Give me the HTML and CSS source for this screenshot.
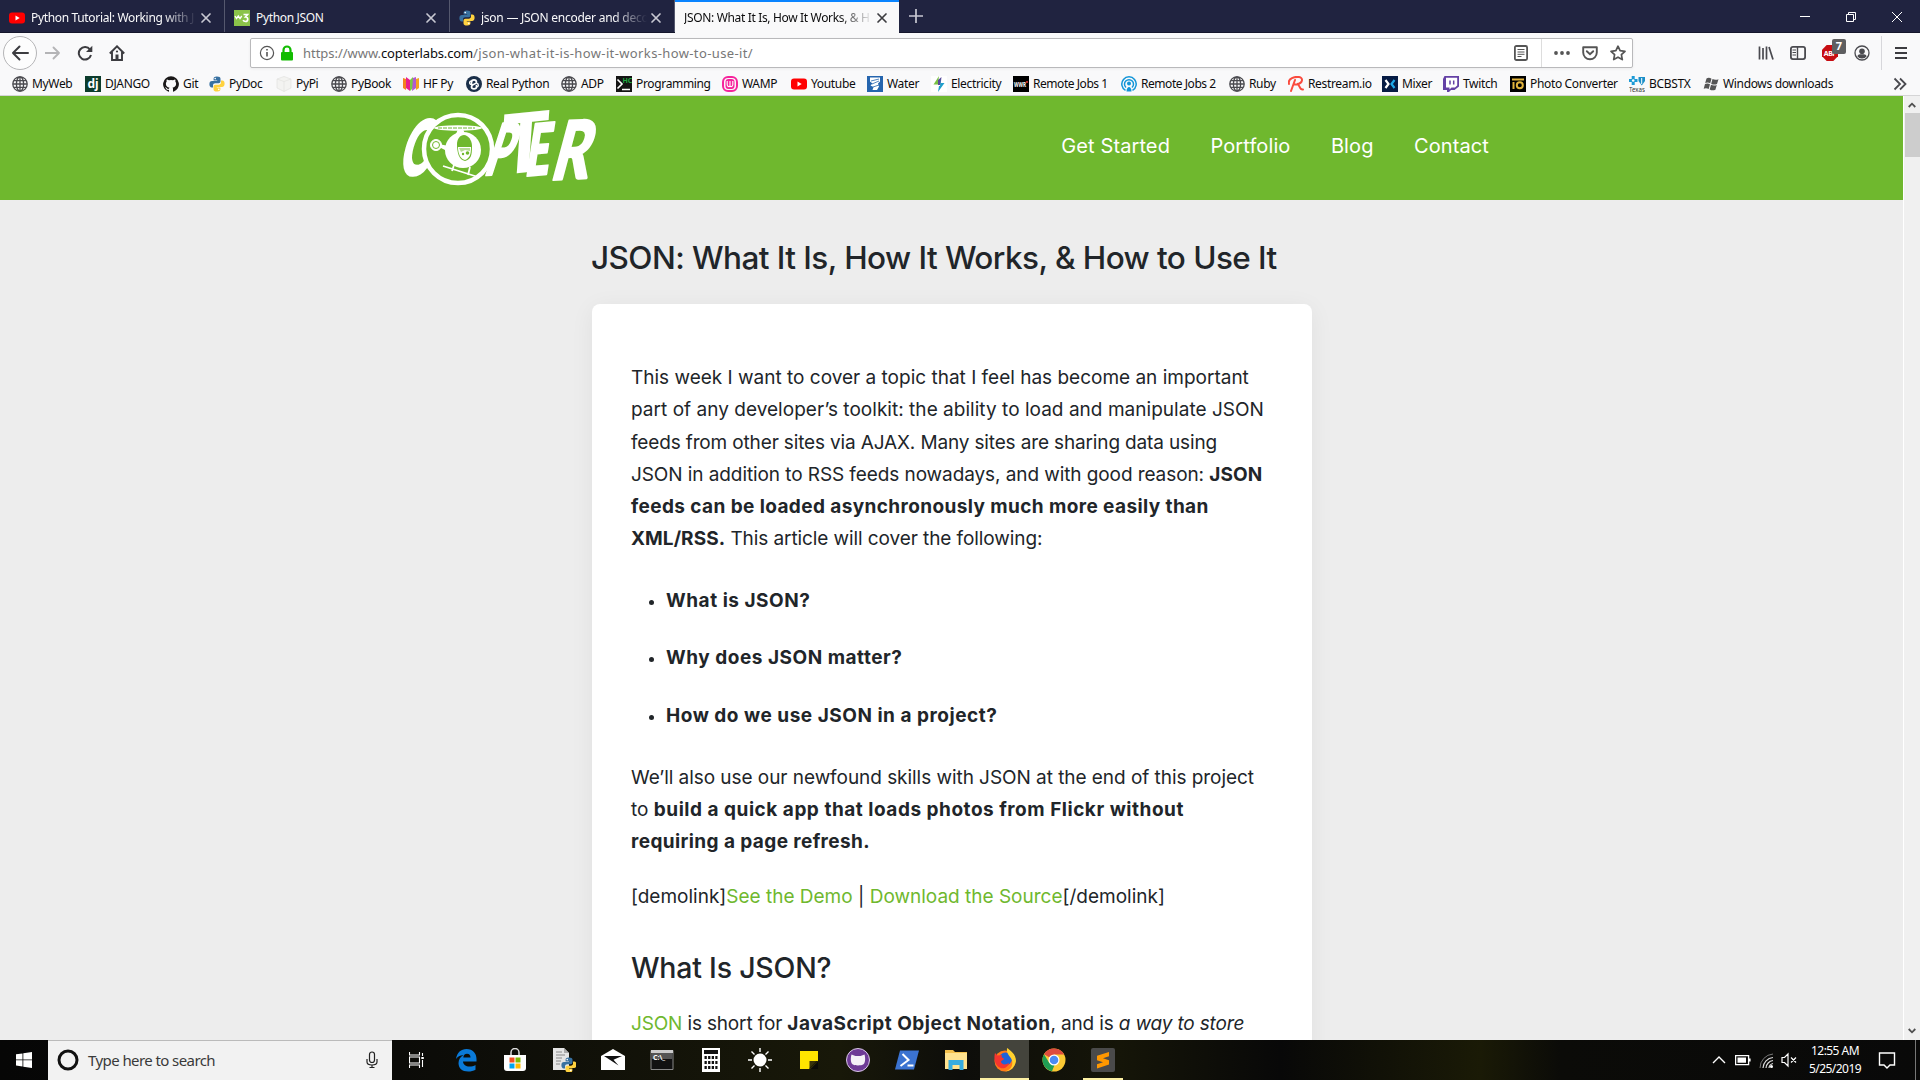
FILE: index.html
```html
<!DOCTYPE html>
<html lang="en">
<head>
<meta charset="utf-8">
<title>JSON: What It Is, How It Works, &amp; How to Use It</title>
<link rel="stylesheet" href="styles.css">
</head>
<body>
<svg class="defs" width="0" height="0">
  <symbol id="close" viewBox="0 0 12 12"><path d="M2 2l8 8M10 2l-8 8" fill="none" stroke="currentColor" stroke-width="1.7" stroke-linecap="round"/></symbol>
  <symbol id="globe" viewBox="0 0 16 16"><g fill="none" stroke="#4a4a4f" stroke-width="1.3"><circle cx="8" cy="8" r="7.2"/><ellipse cx="8" cy="8" rx="3.6" ry="7.2"/><path d="M8 1v14M1 8h14M2 4.7h12M2 11.3h12"/></g></symbol>
  <symbol id="python" viewBox="0 0 16 16"><path fill="#3871a1" d="M7.9.5C5 .5 4.6 1.6 4.6 2.8v1.6h3.6V5H3C1.300 5 .4 6.200.4 8.200c0 2 .9 3.200 2.300 3.200h1.300V9.500c0-1.300 1-2.200 2.200-2.200h3.400c1.100 0 1.900-.9 1.900-2V2.800C11.500 1.400 10.300.5 7.900.5z"/><path fill="#ffd23f" d="M8.100 15.500c2.900 0 3.300-1.100 3.300-2.300v-1.600H7.800V11H13c1.700 0 2.600-1.200 2.600-3.200 0-2-.9-3.200-2.300-3.200H12v1.900c0 1.300-1 2.200-2.200 2.200H6.400c-1.100 0-1.900.9-1.900 2v2.500c0 1.400 1.200 2.300 3.600 2.300z"/><circle cx="6.200" cy="2.600" r=".8" fill="#fff"/><circle cx="9.800" cy="13.400" r=".8" fill="#fff"/></symbol>
  <symbol id="youtube" viewBox="0 0 16 16"><rect x="0" y="2.500" width="16" height="11" rx="3" fill="#f00"/><path d="M6.500 5.600v4.800L10.700 8z" fill="#fff"/></symbol>
</svg>

<header class="tabs">
  <div class="tab">
    <svg class="ic"><use href="#youtube"/></svg><span class="tab-title fade">Python Tutorial: Working with J</span><svg class="x"><use href="#close"/></svg>
  </div>
  <div class="tab">
    <svg class="ic" viewBox="0 0 16 16"><path fill="#8bc34a" d="M0 0h16v16H0z"/><path d="M1 6l1.500 2.500L4.300 6 6 8.500 7.800 6" fill="none" stroke="#fff" stroke-width="1.300"/><path d="M9.500 4.500h4l-2 2.500c3 0 3 4.500 0 4.500-1.200 0-2-.5-2.300-1.500" fill="none" stroke="#fff" stroke-width="1.700"/></svg><span class="tab-title">Python JSON</span><svg class="x"><use href="#close"/></svg>
  </div>
  <div class="tab">
    <svg class="ic"><use href="#python"/></svg><span class="tab-title fade tab-enc">json — JSON encoder and deco</span><svg class="x"><use href="#close"/></svg>
  </div>
  <div class="tab active">
    <span class="tab-title fade">JSON: What It Is, How It Works, &amp; H</span><svg class="x"><use href="#close"/></svg>
  </div>
  <svg class="plus" viewBox="0 0 14 14"><path d="M7 0v14M0 7h14" stroke="#c8c8d2" stroke-width="1.700"/></svg>
  <div class="winctl">
    <svg viewBox="0 0 12 12"><path d="M1 5.500h10" stroke="#fff"/></svg>
    <svg viewBox="0 0 12 12"><path d="M1.500 3.500h7v7h-7zM3.500 3V1.500h7v7H9" fill="none" stroke="#fff"/></svg>
    <svg viewBox="0 0 12 12"><path d="M1 1l10 10M11 1L1 11" stroke="#fff"/></svg>
  </div>
</header>

<nav class="toolbar">
  <div class="navbtns">
    <span class="back"><svg viewBox="0 0 18 16"><path d="M17 8H2M8.500 1.500L2 8l6.500 6.500" fill="none" stroke="#3c3c40" stroke-width="2" stroke-linecap="round" stroke-linejoin="round"/></svg></span>
    <svg viewBox="0 0 16 16"><path d="M0 8h14M8.500 2.500L14 8l-5.500 5.500" fill="none" stroke="#b4b4b6" stroke-width="1.800" stroke-linecap="round" stroke-linejoin="round"/></svg>
    <svg viewBox="0 0 16 16"><path d="M13 4.600A6.200 6.200 0 1 0 14 10" fill="none" stroke="#3c3c40" stroke-width="2"/><path d="M15.300.8V7H9z" fill="#3c3c40"/></svg>
    <svg viewBox="0 0 16 16"><path d="M.8 8.500L8 1.300l7.200 7.200M3 7v8h10V7" fill="none" stroke="#3c3c40" stroke-width="1.900"/><path d="M6.500 15V9.500h3V15z" fill="#3c3c40"/><circle cx="8" cy="6.500" r="1.100" fill="#3c3c40"/></svg>
  </div>
  <div class="urlbar">
    <svg class="info" viewBox="0 0 16 16"><circle cx="8" cy="8" r="6.600" fill="none" stroke="#555" stroke-width="1.200"/><path d="M8 7v4.500M8 4v1.600" stroke="#555" stroke-width="1.600"/></svg>
    <svg class="lock" viewBox="0 0 14 16"><path d="M3.500 8V5a3.500 3.500 0 0 1 7 0v3" fill="none" stroke="#12bc00" stroke-width="2.200"/><rect x="1" y="7" width="12" height="8.500" rx="1" fill="#12bc00"/></svg>
    <p class="url"><span class="u1">https://www.</span><span class="u2">copterlabs.com</span><span class="u3">/json-what-it-is-how-it-works-how-to-use-it/</span></p>
    <svg class="reader" viewBox="0 0 16 16"><rect x="1.900" y="1" width="12.200" height="14" rx="1.500" fill="none" stroke="#555" stroke-width="1.800"/><path d="M4.500 4.500h7M4.500 7h7M4.500 9.300h7M4.500 11.500h4" stroke="#555"/></svg>
    <span class="actions">
      <svg viewBox="0 0 16 16"><g fill="#555"><circle cx="2" cy="8" r="1.900"/><circle cx="8" cy="8" r="1.900"/><circle cx="14" cy="8" r="1.900"/></g></svg>
      <svg viewBox="0 0 16 16"><path d="M1.200 2.200h13.600v5.300a6.800 6.800 0 0 1-13.600 0z" fill="none" stroke="#555" stroke-width="1.900" stroke-linejoin="round"/><path d="M4.800 6.200L8 9.300l3.200-3.100" fill="none" stroke="#555" stroke-width="1.900" stroke-linecap="round"/></svg>
      <svg viewBox="0 0 16 16"><path d="M8 1.200l2.100 4.500 4.900.6-3.600 3.400.9 4.900L8 12.200l-4.300 2.400.9-4.900L1 6.300l4.900-.6z" fill="none" stroke="#555" stroke-width="1.700" stroke-linejoin="round"/></svg>
    </span>
  </div>
  <div class="tools">
    <svg viewBox="0 0 16 16"><path d="M1.500 1.500v13M5 3v11.500M8.500 1.500v13M11 2l4 12.500" stroke="#4a4a4f" stroke-width="1.700"/></svg>
    <svg viewBox="0 0 16 16"><rect x=".9" y="1.900" width="14.200" height="12.200" rx="2" fill="none" stroke="#4a4a4f" stroke-width="1.800"/><path d="M7.500 2v12" stroke="#4a4a4f" stroke-width="1.400"/><path d="M2.500 5h3.500M2.500 7.500h3.500M2.500 10h3.500" stroke="#4a4a4f"/></svg>
    <span class="abp"><svg viewBox="0 0 16 16"><path d="M4.700 0h6.600L16 4.700v6.600L11.300 16H4.700L0 11.300V4.700z" fill="#c70d12"/><text x="8" y="10.800" text-anchor="middle" font-size="7" font-weight="700" fill="#fff">ABP</text></svg><b>7</b></span>
    <svg viewBox="0 0 16 16"><circle cx="8" cy="8" r="7" fill="none" stroke="#4a4a4f" stroke-width="1.300"/><circle cx="8" cy="6.300" r="2.800" fill="#4a4a4f"/><path d="M3.300 11.300c1-2 2-2 4.700-2s3.700 0 4.700 2A5.600 5.600 0 0 1 8 13.600a5.600 5.600 0 0 1-4.700-2.300z" fill="#4a4a4f"/></svg>
    <svg class="menu" viewBox="0 0 16 16"><path d="M2 3h12M2 8h12M2 13h12" stroke="#3c3c40" stroke-width="2"/></svg>
  </div>
</nav>

<div class="bookmarks">
  <a><svg class="ic"><use href="#globe"/></svg>MyWeb</a>
  <a><svg class="ic" viewBox="0 0 16 16"><path fill="#0c3c2c" d="M0 0h16v16H0z"/><text x="8" y="12" text-anchor="middle" font-size="12" font-weight="700" fill="#fff">dj</text></svg>DJANGO</a>
  <a><svg class="ic" viewBox="0 0 16 16"><path fill="#191717" d="M8 .3a7.900 7.900 0 0 0-2.500 15.400c.4.100.5-.2.500-.4v-1.500c-2.200.5-2.700-.9-2.700-.9-.4-.9-.9-1.200-.9-1.200-.7-.5.100-.5.100-.5.800.100 1.200.8 1.200.8.700 1.200 1.900.9 2.300.7.100-.5.300-.9.500-1.100-1.800-.2-3.600-.9-3.600-4 0-.9.300-1.600.8-2.100-.1-.2-.4-1 .1-2.100 0 0 .7-.2 2.200.8a7.600 7.600 0 0 1 4 0c1.500-1 2.200-.8 2.200-.8.500 1.100.2 1.900.1 2.100.5.500.8 1.200.8 2.100 0 3.100-1.900 3.800-3.600 4 .3.200.500.7.500 1.500v2.200c0 .2.100.5.500.4A7.900 7.900 0 0 0 8 .3z"/></svg>Git</a>
  <a><svg class="ic"><use href="#python"/></svg>PyDoc</a>
  <a><svg class="ic" viewBox="0 0 16 16"><path fill="#f3f3f1" stroke="#dededc" stroke-width=".6" d="M1 3l7-2.500L15 3v9l-7 3.500L1 12z"/><path d="M1 3l7 2.500L15 3M8 5.500v10" fill="none" stroke="#e3e3e0" stroke-width=".7"/></svg>PyPi</a>
  <a><svg class="ic"><use href="#globe"/></svg>PyBook</a>
  <a><svg class="ic" viewBox="0 0 16 16"><path fill="#f4821f" d="M0 2l3 1v11l-3-2z"/><path fill="#e81f8c" d="M3 1l4 3v11l-4-3z"/><path fill="#7ac943" d="M7 4l3-3v11l-3 3z"/><path fill="#b05ad0" d="M10 2l3-1v11l-4 3z"/><path fill="#f6a21f" d="M13 3l3-1v10l-3 2z"/></svg>HF Py</a>
  <a><svg class="ic" viewBox="0 0 16 16"><circle cx="8" cy="8" r="8" fill="#1b2f49"/><path d="M5.500 9V6.500c0-3.500 5-3.500 5 0 0 2-5 1-5 4.500 0 2.500 5 2.500 5 0V9" fill="none" stroke="#fff" stroke-width="1.700"/><path d="M5.500 8.500C3 8.500 3 5 5.500 5M10.500 7.500c2.500 0 2.500 3.500 0 3.500" fill="none" stroke="#fff" stroke-width="1.300"/></svg>Real Python</a>
  <a><svg class="ic"><use href="#globe"/></svg>ADP</a>
  <a><svg class="ic" viewBox="0 0 16 16"><path fill="#141414" d="M0 0h16v16H0z"/><path d="M1.500 3.500L6 8l-4.500 4.500M6 13.500h8" fill="none" stroke="#fff" stroke-width="1.600"/><text x="6.500" y="6.500" font-size="7" font-weight="700" fill="#1faa3f">HC</text></svg>Programming</a>
  <a><svg class="ic" viewBox="0 0 16 16"><rect x="1" y="1" width="14" height="14" rx="5" fill="none" stroke="#f6249c" stroke-width="2"/><rect x="3.500" y="3" width="9" height="10" rx="3" fill="#f6249c"/><path d="M5.200 5v3.500c0 2.500 2.300 2.500 2.800 1.200.5 1.300 2.800 1.300 2.800-1.200V5M8 5v5" fill="none" stroke="#fff" stroke-width="1.100"/></svg>WAMP</a>
  <a><svg class="ic"><use href="#youtube"/></svg>Youtube</a>
  <a><svg class="ic" viewBox="0 0 16 16"><path fill="#2565ae" d="M0 0h16v16H0z"/><path d="M3 1.500h10v4l-2 2 1 3-2 3.500H5.500l1-3-3-1.500 2-2-2.500-2z" fill="#fff"/><path d="M4 5l8-2M5 8l7-3M6 11l6-2" stroke="#2565ae" stroke-width=".8"/></svg>Water</a>
  <a><svg class="ic" viewBox="0 0 16 16"><path fill="#fff" d="M0 0h16v16H0z"/><path fill="#7ac143" d="M8 0L2.500 8.500H7z"/><path fill="#5b4a9c" d="M7 4v5h2.500l1-8z"/><path fill="#1f9fcb" d="M10 2.500V7h3.500L7 16l1-6h1z"/></svg>Electricity</a>
  <a><svg class="ic" viewBox="0 0 16 16"><path d="M0 0h16v16H0z"/><text x="1" y="10.500" font-size="6.500" font-weight="700" fill="#fff" textLength="12" lengthAdjust="spacingAndGlyphs">WWR</text><circle cx="14" cy="6" r="1" fill="#e33"/></svg>Remote Jobs 1</a>
  <a><svg class="ic" viewBox="0 0 16 16"><g fill="none" stroke="#1295d8" stroke-width="1.500"><path d="M4.500 14.300a7.200 7.200 0 1 1 7 0"/><path d="M5 11.500a4.500 4.500 0 1 1 6 0"/></g><circle cx="8" cy="7.500" r="2" fill="#1295d8"/><path d="M5.500 15.500c0-6 5-6 5 0z" fill="#1295d8"/></svg>Remote Jobs 2</a>
  <a><svg class="ic"><use href="#globe"/></svg>Ruby</a>
  <a><svg class="ic" viewBox="0 0 16 16"><path d="M1 8C-.5 2 7 .5 11 1c4.500.5 4 6.500-2 7 3 0 2 6 6 5.500M7 4L3 15M5.500 8.500h4" fill="none" stroke="#fa4b3e" stroke-width="2" stroke-linecap="round"/></svg>Restream.io</a>
  <a><svg class="ic" viewBox="0 0 16 16"><path fill="#061b44" d="M0 0h16v16H0z"/><path d="M3.500 4l3 4-3 4" fill="none" stroke="#fff" stroke-width="2.200"/><path d="M12.500 4l-3 4 3 4" fill="none" stroke="#1fa9e8" stroke-width="2.200"/></svg>Mixer</a>
  <a><svg class="ic" viewBox="0 0 16 16"><path fill="#6441a5" d="M1.500 0H16v10.500L11.500 14H8l-2 2H4v-2H0V3z"/><path fill="#fff" d="M3 1.800h11.200v7.700L12 11.500H8.500l-2 2v-2H3z"/><path d="M7 4.500v4M10.700 4.500v4" stroke="#6441a5" stroke-width="1.500"/></svg>Twitch</a>
  <a><svg class="ic" viewBox="0 0 16 16"><path d="M0 0h16v16H0z"/><path d="M2 3.500h12M3.500 6v7" stroke="#e3b43c" stroke-width="2"/><circle cx="9.800" cy="9.300" r="3" fill="none" stroke="#e3b43c" stroke-width="2"/></svg>Photo Converter</a>
  <a><svg class="ic" viewBox="0 0 16 16"><path d="M4.200 0v9M0 4.500h8.500" stroke="#1c9ad6" stroke-width="3"/><circle cx="4.200" cy="4.500" r="1.300" fill="#fff"/><path d="M9.500 1H16v4l-3.200 4.500L9.500 5z" fill="#1c8fc8"/><path d="M12.700 2v6" stroke="#fff"/><text x="0" y="15.500" font-size="6.500" fill="#333" textLength="16" lengthAdjust="spacingAndGlyphs">Texas</text></svg>BCBSTX</a>
  <a><svg class="ic" viewBox="0 0 16 16"><g fill="#555"><path d="M3.500 2.500C5 1.500 7 1.700 8.500 2.700L7.200 7.300c-1.500-1-3.500-1-5-.2z"/><path d="M9.500 3c2 1 4 1 6 .2L14 8c-2 .8-4 .8-5.800-.3z"/><path d="M2 8c1.500-.8 3.500-.8 5 .3L5.700 13C4.200 12 2.200 12 .7 12.700z"/><path d="M8 8.800c1.900 1 3.900 1 5.800.2l-1.400 4.700c-2 .8-4 .8-5.700-.3z"/></g></svg>Windows downloads</a>
  <svg class="more" viewBox="0 0 14 14"><path d="M1.500 1.500L7 7l-5.500 5.500M7 1.500L12.500 7 7 12.500" fill="none" stroke="#4a4a4f" stroke-width="1.800"/></svg>
</div>

<main class="viewport">
  <div class="page">
    <div class="site-head">
      <svg class="logo" viewBox="0 0 200 76">
        <g class="lettering">
          <text transform="translate(-5 64) skewX(-16) scale(.56 1)" font-size="76">C</text>
          <text transform="translate(81 64) rotate(-2) skewX(-20) scale(.56 1)" font-size="70">P</text>
          <text transform="translate(97 64) rotate(-6) skewX(-10) scale(.96 1)" font-size="82" stroke-width="0">T</text>
          <text transform="translate(122 65) rotate(-5) skewX(-14) scale(.6 1)" font-size="70">E</text>
          <text transform="translate(147 69) rotate(-3) skewX(-18) scale(.72 1)" font-size="80">R</text>
        </g>
        <circle cx="56" cy="38" r="34" fill="#6fb82e" stroke="#fff" stroke-width="4.500"/>
        <ellipse cx="56" cy="17" rx="24" ry="2.700"/><path d="M36 17h37" stroke="#6fb82e" stroke-width="1" stroke-dasharray="4 1"/>
        <path d="M56 18h5l2 5h-9z"/>
        <path d="M37 33l14 3v7L37 36z"/>
        <circle cx="34" cy="34" r="5.500" stroke="#fff"/><circle cx="34" cy="34" r="3.500" fill="none" stroke="#6fb82e"/>
        <ellipse cx="61" cy="39" rx="18" ry="18"/>
        <path d="M55 33c0-5 3-9 7-9s8 5 8 11c0 10-1 13-7 15-6-1-8-8-8-17z" fill="#6fb82e"/>
        <path d="M56 36h13c0 7-1 11-6 13-4-1-7-5-7-13z"/><path d="M57 37h11v3l-5-1-4 2z" fill="#6fb82e" opacity=".5"/><circle cx="61" cy="43" r="1.200" fill="#6fb82e"/><circle cx="65.500" cy="42" r="1.800" fill="#6fb82e"/>
        <path d="M52 54l-2 6M68 56l-2 8M41 55l35 11" fill="none" stroke="#fff" stroke-width="1.800"/>
      </svg>
      <nav class="site-nav"><a>Get Started</a><a>Portfolio</a><a>Blog</a><a>Contact</a></nav>
    </div>
    <article class="article">
      <h1>JSON: What It Is, How It Works, &amp; How to Use It</h1>
      <div class="card">
        <p>This week I want to cover a topic that I feel has become an important<br><span class="l2">part of any developer’s toolkit: the ability to load and manipulate JSON</span><br><span class="l3">feeds from other sites via AJAX. Many sites are sharing data using</span><br><span class="l4">JSON in addition to RSS feeds nowadays, and with good reason:</span> <b class="short">JSON<br></b><b class="l5">feeds can be loaded asynchronously much more easily than</b><br><b class="short">XML/RSS.</b> <span class="l4">This article will cover the following:</span></p>
        <ul>
          <li><b>What is JSON?</b></li>
          <li><b>Why does JSON matter?</b></li>
          <li><b>How do we use JSON in a project?</b></li>
        </ul>
        <p><span class="l6">We’ll also use our newfound skills with JSON at the end of this project</span><br>to <b>build a quick app that loads photos from Flickr without</b><br><b class="l5">requiring a page refresh.</b></p>
        <p class="demo">[demolink]<a>See the Demo</a> | <a>Download the Source</a>[/demolink]</p>
        <h2>What Is JSON?</h2>
        <p class="last"><a>JSON</a> is short for <b>JavaScript Object Notation</b>, and is <em>a way to store</em></p>
      </div>
    </article>
  </div>
  <div class="scroll">
    <svg viewBox="0 0 8 6"><path d="M.7 5L4 1.700 7.300 5" fill="none" stroke="#505050" stroke-width="1.800"/></svg>
    <div class="thumb"></div>
    <svg class="down" viewBox="0 0 8 6"><path d="M.7 1L4 4.300 7.300 1" fill="none" stroke="#505050" stroke-width="1.800"/></svg>
  </div>
</main>

<footer class="taskbar">
  <div class="start"><svg viewBox="0 0 16 16" fill="#fff"><path d="M0 2.300l6.500-.9v6.100H0zM7.300 1.300L16 0v7.500H7.300zM0 8.300h6.500v6.200L0 13.600zM7.300 8.300H16V16l-8.700-1.300z"/></svg></div>
  <div class="search"><svg viewBox="0 0 22 22"><circle cx="11" cy="11" r="9" fill="none" stroke="#111" stroke-width="3"/></svg><span>Type here to search</span><svg class="mic" viewBox="0 0 12 18"><rect x="3.500" y="1" width="5" height="10.500" rx="2.500" fill="none" stroke="#222" stroke-width="1.200"/><path d="M1 8v3c0 4 10 4 10 0V8M6 14v3M3.500 16.500h5" fill="none" stroke="#222" stroke-width="1.200"/></svg></div>
  <div class="apps">
    <i><svg viewBox="0 0 16 16"><path d="M.5 0v3h10V0M.5 16v-3h10v3M.5 5h10v6H.5zM13.500 1v3M13.500 8v7" fill="none" stroke="#fff" stroke-width="1.100"/><path d="M12.300 5h2.500v2h-2.500z" fill="#fff"/></svg></i>
    <i><svg class="big" viewBox="0 0 22 24"><path fill="#0a7ad9" d="M1 11C2 4.500 6 1 11.500 1 18 1 21.500 5.500 21.500 11v2.500H8c.3 3.500 3 5 6.300 5 2.500 0 4.500-.5 6.200-1.500v4.700c-2 1.200-4.500 1.800-7.300 1.800C7 23.500 3.500 20 3.500 15c0-3.500 2-6.500 5-7.800C5.500 7 2.500 8.500 1 11zm7.300-1.500h7.200C15.500 7 14.300 5.700 12 5.700S8.500 7 8.300 9.500z"/></svg></i>
    <i><svg class="big" viewBox="0 0 24 24"><path d="M8 8V4.500a4 4 0 0 1 8 0V8" fill="none" stroke="#ddd" stroke-width="1.500"/><path d="M1 7h22v13c0 2-1 3-3 3H4c-2 0-3-1-3-3z" fill="#fff"/><path fill="#f25022" d="M6.500 9.500h5v5h-5z"/><path fill="#7fba00" d="M12.500 9.500h5v5h-5z"/><path fill="#00a4ef" d="M6.500 15.500h5v5h-5z"/><path fill="#ffb900" d="M12.500 15.500h5v5h-5z"/></svg></i>
    <i><svg class="big" viewBox="0 0 24 24"><path fill="#e5e5e5" d="M1 0h11l5 5v17H1z"/><path fill="#aaa" d="M12 0l5 5h-5z"/><path d="M4 4h6M4 7h9M4 10h6M4 13h5M4 16h4" stroke="#888"/><svg x="9" y="9" width="15" height="15"><use href="#python"/></svg></svg></i>
    <i><svg class="big" viewBox="0 0 24 24"><path fill="#fff" d="M0 8l12-7 12 7v14H0z"/><path fill="#111" d="M3 8h18l-8.500 3.800 5 5.700z"/></svg></i>
    <i><svg class="big" viewBox="0 0 24 24"><path fill="#111" stroke="#888" d="M1 2.500h22v19H1z"/><path fill="#ccc" d="M1 2h22v3H1z"/><path fill="#555" d="M2 5h20v6H2z"/><text x="3" y="12" font-size="7" font-weight="700" fill="#fff">C:\_</text></svg></i>
    <i><svg class="big" viewBox="0 0 24 24"><path fill="#fff" d="M3 0h18v24H3z"/><path fill="#111" d="M5 2h14v4H5z"/><path d="M5.500 9.500h13M5.500 14.500h13M5.500 19.500h13" stroke="#111" stroke-width="3" stroke-dasharray="2.300 1.300"/></svg></i>
    <i><svg class="big" viewBox="0 0 24 24"><circle cx="12" cy="12" r="6.500" fill="#fff"/><path d="M12 0v4M12 20v4M0 12h4M20 12h4M3.500 3.500l3 3M17.500 17.500l3 3M20.500 3.500l-3 3M6.500 17.500l-3 3" stroke="#fff" stroke-width="1.400"/></svg></i>
    <i><svg class="big" viewBox="0 0 24 24"><path fill="#ffe400" d="M3 3h18v18H3z"/><path d="M12.500 13H21v8h-8.500z" fill="#39330a"/><path d="M21 13.500V21h-7.500z" fill="#0b0b08"/><path d="M12.500 21v-1l7-7H21z" fill="#1c1c00"/></svg></i>
    <i><svg class="big" viewBox="0 0 24 24"><circle cx="12" cy="12" r="11.500" fill="#6e3a96" stroke="#d9c8e6"/><path fill="#f4f0f7" d="M5.500 6.500l4 1.500h5l4-1.500c1 3.500 1 8-1 9.700-2 1.600-9 1.600-11 0s-2-6.200-1-9.700z"/></svg></i>
    <i><svg class="big" viewBox="0 0 24 24"><path fill="#3b73d1" d="M5 2.500h19L19 21.500H0z"/><path d="M7.500 6l6 6-8 6M12.500 17.500h6" fill="none" stroke="#fff" stroke-width="2"/></svg></i>
    <i><svg class="big" viewBox="0 0 24 24"><path fill="#f4c04c" d="M1 2h8l2 2h12v4H1z"/><path fill="#ffe28f" d="M1 5h22v16H1z"/><path fill="#36ace0" d="M4.500 12h15v10h-4v-5h-7v5h-4z"/></svg></i>
    <i class="current"><svg class="big" viewBox="0 0 24 24"><circle cx="12" cy="13" r="10.500" fill="#ff7a18"/><circle cx="12.500" cy="11" r="6.500" fill="#1e62d8"/><path fill="#ffd02e" d="M14 0c3 2 9 6 9 13-1 7-7 10.500-11 10.500 7-2 8-7 7-11-1-4-6-6-5-12.500z"/><path fill="#f5352f" d="M2 5l2.500 2.500L9 7c-1 2 0 3 2 3.500 0 2-3 1.500-3 3.500 1 3 5 3 8 1-1 5-7 7-11 3.500C1 15 1 9 2 5z"/></svg></i>
    <i><svg class="big" viewBox="0 0 24 24"><circle cx="12" cy="12" r="11.500" fill="#fbc934"/><path fill="#dd4b3e" d="M12 12L2 6.300A11.500 11.500 0 0 1 22.200 6.500H12z"/><path fill="#1f9d55" d="M2 6.300l5.300 8.700 5.200 2-2.500 6.300A11.500 11.500 0 0 1 2 6.300z"/><circle cx="12" cy="12" r="5.500" fill="#fff"/><circle cx="12" cy="12" r="4.300" fill="#4a8af4"/></svg></i>
    <i class="open"><svg class="big" viewBox="0 0 24 24"><rect width="24" height="24" rx="2" fill="#4a4a4a"/><path fill="#ff9800" d="M6 7.700l12-3.700v4.300l-6 2 6 1.900v4.300L6 20.500v-4.300l6-2-6-2z"/></svg></i>
  </div>
  <div class="tray">
    <svg viewBox="0 0 16 16"><path d="M2 11l6-6 6 6" fill="none" stroke="#fff" stroke-width="1.400"/></svg>
    <svg viewBox="0 0 16 16"><path d="M.6 3.600h13v9H.6z" fill="none" stroke="#fff" stroke-width="1.300"/><path d="M2.500 5.500H11v5.200H2.500zM14 6.500h1.600v3H14z" fill="#fff"/></svg>
    <svg viewBox="0 0 16 16"><g fill="none"><path d="M2 16A14 14 0 0 1 15 2" stroke="#777"/><path d="M5 16A11 11 0 0 1 15 5.500M8 16a8 8 0 0 1 7-7.500M11 16a5 5 0 0 1 4-4.500" stroke="#ddd" stroke-width="1.200"/></g><circle cx="13.500" cy="14.500" r="1.500" fill="#fff"/></svg>
    <svg viewBox="0 0 16 16"><path d="M1 5.500h2.500L7 2v12l-3.500-3.500H1zM10 5.500l5 5M15 5.500l-5 5" fill="none" stroke="#fff" stroke-width="1.200"/></svg>
    <p class="clock">12:55 AM<br>5/25/2019</p>
    <svg class="notif" viewBox="0 0 18 18"><path d="M1.500 2h15v12H12l-3 3-3-3H1.500z" fill="none" stroke="#fff" stroke-width="1.400"/></svg>
  </div>
</footer>
</body>
</html>
```
FILE: styles.css
```css
* { box-sizing: border-box; margin: 0; padding: 0; }
body { width: 1920px; height: 1080px; overflow: hidden; display: flex; flex-direction: column; font: 12px/16px "Noto Sans", "Open Sans", sans-serif; letter-spacing: -.34px; color: #0c0c0d; background: #ededed; }
svg { flex: none; display: block; }
.defs { position: absolute; }
.ic { width: 16px; height: 16px; }

/* tab strip */
.tabs { height: 33px; flex: none; display: flex; background: #202340; border-bottom: 1px solid #14162b; color: #f9f9fa; }
.tab { width: 225px; height: 32px; display: flex; align-items: center; padding: 3px 12px 0 9px; border-right: 1px solid #55586e; }
.tab-title { flex: 1; width: 0; margin: 0 3px 0 6px; white-space: nowrap; overflow: hidden; }
.tab-enc { letter-spacing: -.25px; }
.fade { -webkit-mask-image: linear-gradient(to left, transparent 0, #000 34px); mask-image: linear-gradient(to left, transparent 0, #000 34px); }
.x { width: 12px; height: 12px; color: #c8c8d2; }
.tab.active { height: 33px; width: 224px; background: #f9f9fa; color: #0c0c0d; border: 0; border-top: 2px solid #0a84ff; padding-top: 1px; padding-left: 3px; padding-right: 11px; }
.active .x { color: #3c3c40; }
.plus { width: 14px; height: 14px; margin: 9px 0 0 10px; }
.winctl { margin-left: auto; display: flex; gap: 34px; padding: 11px 17px 0 0; }
.winctl svg { width: 12px; height: 12px; }

/* navigation toolbar */
.toolbar { height: 39px; flex: none; background: #f9f9fa; display: flex; align-items: center; }
.navbtns { width: 250px; display: flex; align-items: center; padding-left: 3px; gap: 16px; }
.navbtns svg { width: 16px; height: 16px; }
.navbtns .back { width: 34px; height: 34px; border: 1px solid #b5b5b7; border-radius: 50%; background: #fdfdfd; display: flex; align-items: center; justify-content: center; margin-right: -8px; }
.back svg { width: 18px; }
.urlbar { width: 1383px; height: 30px; background: #fff; border: 1px solid #b9b9bb; border-radius: 2px; box-shadow: 0 1px 3px rgba(0,0,0,.06); display: flex; align-items: center; padding: 0 6px 0 8px; }
.info { width: 16px; height: 16px; }
.lock { width: 14px; height: 16px; margin: 0 9px 0 5px; }
.url { font-size: 13px; color: #777; flex: 1; white-space: nowrap; padding-top: 1px; }
.u1 { letter-spacing: -.035px; }
.u2 { color: #0c0c0d; letter-spacing: -.15px; }
.u3 { letter-spacing: .376px; }
.reader { width: 16px; height: 16px; margin-right: 12px; }
.actions { display: flex; align-items: center; gap: 12px; height: 28px; padding-left: 12px; border-left: 1px solid #ddd; }
.actions svg { width: 16px; height: 16px; }
.tools { margin-left: auto; display: flex; align-items: center; gap: 16px; padding-right: 11px; }
.tools svg { width: 16px; height: 16px; }
.abp { position: relative; letter-spacing: -.5px; }
.abp b { position: absolute; left: 10px; top: -6px; width: 14px; height: 15px; background: #5e5e60; border-radius: 2px; color: #fff; font-size: 11px; line-height: 14px; text-align: center; letter-spacing: 0; }
.tools .menu { box-sizing: content-box; padding: 9px 0 9px 11px; border-left: 1px solid #d7d7db; margin-left: -5px; }

/* bookmarks bar */
.bookmarks { height: 24px; flex: none; background: #f9f9fa; border-bottom: 1px solid #d5d5d6; display: grid; align-items: center; padding-left: 12px; grid-template-columns: 73px 78px 46px 67px 55px 72px 63px 95px 55px 106px 69px 76px 64px 82px 108px 108px 59px 94px 61px 67px 119px 74px 190px 16px; }
.bookmarks a { display: flex; align-items: center; gap: 4px; white-space: nowrap; }
.bookmarks svg text { letter-spacing: 0; }
.bookmarks a:nth-child(15), .bookmarks a:nth-child(16) { letter-spacing: -.45px; }
.more { width: 14px; height: 14px; }

/* web page */
.viewport { height: 944px; flex: none; display: flex; overflow: hidden; }
.page { width: 1903px; background: #ededed; overflow: hidden; font-family: Inter, "Liberation Sans", sans-serif; color: #212529; letter-spacing: 0; }
.site-head { height: 104px; background: #6fb82e; display: flex; justify-content: space-between; padding: 15px 414px 0 402px; }
.logo { width: 200px; height: 76px; overflow: visible; font-family: Lato, sans-serif; font-weight: 900; fill: #fff; }
.lettering { stroke: #fff; stroke-width: 2.5px; stroke-linejoin: round; }
.site-nav { display: flex; gap: 40.5px; color: #fff; font-size: 20px; line-height: 24px; padding-top: 23px; letter-spacing: .1px; }
.article { width: 720px; margin-left: 592px; }
h1 { font-size: 31.5px; font-weight: 500; line-height: 40px; letter-spacing: -.56px; padding-top: 38px; height: 104px; margin-left: -1px; white-space: nowrap; }
.card { height: 760px; background: #fff; border-radius: 8px; box-shadow: 0 4px 24px rgba(0,0,0,.06); padding: 58px 39px 0; font-size: 19px; line-height: 32.25px; white-space: nowrap; overflow: hidden; }
b { font-weight: 700; letter-spacing: .52px; }
.short { letter-spacing: .06px; }
.l2 { letter-spacing: .03px; }
.l3 { letter-spacing: -.145px; }
.l4 { letter-spacing: -.086px; }
.l5 { letter-spacing: .4px; }
.l6 { letter-spacing: -.05px; }
ul { margin: 29.5px 0 29.5px; padding-left: 35px; }
li + li { margin-top: 25.2px; }
li::marker { font-size: 17px; }
.card a { color: #6fb82e; }
.demo { margin-top: 23px; letter-spacing: 0; }
h2 { font-size: 28.5px; font-weight: 500; line-height: 40px; letter-spacing: -.22px; margin: 34px 0 20px; }
.last { letter-spacing: -.16px; }
.scroll { width: 17px; background: #f0f0f0; border-left: 1px solid #fff; display: flex; flex-direction: column; align-items: center; padding: 6px 0; }
.scroll svg { width: 8px; height: 6px; }
.thumb { width: 15px; height: 44px; background: #cdcdcd; margin-top: 5px; }
.scroll .down { margin-top: auto; }

/* taskbar */
.taskbar { height: 40px; flex: none; display: flex; background: linear-gradient(90deg, #060606 0, #0b0b08 400px, #181809 840px, #0d0d0a 960px, #151508 1120px, #080808 1280px, #1a1a06 1480px, #0b0b08 1560px, #090909 1920px); color: #fff; }
.start { width: 48px; display: flex; align-items: center; justify-content: center; }
.start svg { width: 16px; height: 16px; }
.search { width: 344px; background: #f2f2f2; border-top: 1px solid #bbb; display: flex; align-items: center; padding: 0 14px 2px 9px; color: #3a3a3a; font-size: 15px; letter-spacing: -.58px; }
.search svg { width: 22px; height: 22px; }
.search span { flex: 1; padding: 0 0 0 9px; }
.search .mic { width: 12px; height: 18px; }
.apps { display: flex; }
.apps i { width: 49px; height: 40px; display: flex; align-items: center; justify-content: center; font-style: normal; letter-spacing: 0; }
.apps svg { width: 16px; height: 16px; }
.apps .big { width: 24px; height: 24px; }
.apps .current { background: #44443c; border-bottom: 2px solid #fdf1a4; padding-top: 2px; }
.apps .open { width: 40px; margin-left: 5px; border-bottom: 2px solid #fdf1a4; padding-top: 2px; }
.tray { margin-left: auto; display: flex; align-items: center; padding-right: 19px; border-right: 1px solid #777; margin-right: 4px; gap: 7px; }
.tray svg { width: 16px; height: 16px; }
.tray svg:first-child { margin-right: 1px; }
.clock { width: 62px; text-align: center; letter-spacing: -.55px; line-height: 18px; }
.tray .notif { width: 18px; height: 18px; margin-left: 5px; }
```
